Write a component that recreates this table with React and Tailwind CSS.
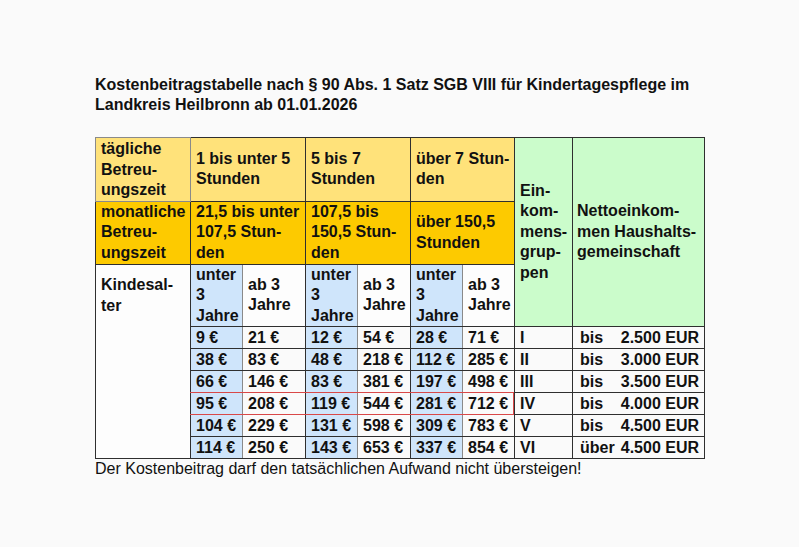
import React from "react";

const Y1 = "bg-[#ffe27a]";
const Y2 = "bg-[#fdca00]";
const BL = "bg-[#cfe5fb]";
const GR = "bg-[#cbfccb]";

const base = "border border-[#2f2f2f] px-[5px] align-middle leading-[20.5px] whitespace-nowrap";

const rows = [
  ["9 €", "21 €", "12 €", "54 €", "28 €", "71 €", "I", "bis", "2.500 EUR"],
  ["38 €", "83 €", "48 €", "218 €", "112 €", "285 €", "II", "bis", "3.000 EUR"],
  ["66 €", "146 €", "83 €", "381 €", "197 €", "498 €", "III", "bis", "3.500 EUR"],
  ["95 €", "208 €", "119 €", "544 €", "281 €", "712 €", "IV", "bis", "4.000 EUR"],
  ["104 €", "229 €", "131 €", "598 €", "309 €", "783 €", "V", "bis", "4.500 EUR"],
  ["114 €", "250 €", "143 €", "653 €", "337 €", "854 €", "VI", "über", "4.500 EUR"],
];

export default function App() {
  return (
    <div
      className="min-h-screen w-full bg-[#fafafa] flex justify-center pt-[75px] text-[#111]"
      style={{ fontFamily: '"Liberation Sans", Arial, sans-serif' }}
    >
      <div className="w-[609px]">
        <h1 className="text-[16px] font-bold leading-[20px] whitespace-nowrap">
          Kostenbeitragstabelle nach § 90 Abs. 1 Satz SGB VIII für Kindertagespflege im
          <br />
          Landkreis Heilbronn ab 01.01.2026
        </h1>
        <div className="relative mt-[22px]">
          <table className="table-fixed border-collapse w-[609px] text-[16px] font-bold">
            <colgroup>
              <col className="w-[95px]" />
              <col className="w-[52px]" />
              <col className="w-[63px]" />
              <col className="w-[52px]" />
              <col className="w-[53px]" />
              <col className="w-[52px]" />
              <col className="w-[52px]" />
              <col className="w-[58px]" />
              <col className="w-[132px]" />
            </colgroup>
            <tbody>
              <tr className="h-[63px]">
                <td className={`${base} ${Y1} align-top pt-[1px] border-[#8a8a8a]`}>
                  tägliche
                  <br />
                  Betreu-
                  <br />
                  ungszeit
                </td>
                <td colSpan={2} className={`${base} ${Y1}`}>
                  1 bis unter 5
                  <br />
                  Stunden
                </td>
                <td colSpan={2} className={`${base} ${Y1}`}>
                  5 bis 7
                  <br />
                  Stunden
                </td>
                <td colSpan={2} className={`${base} ${Y1}`}>
                  über 7 Stun-
                  <br />
                  den
                </td>
                <td rowSpan={3} className={`${base} ${GR}`}>
                  Ein-
                  <br />
                  kom-
                  <br />
                  mens-
                  <br />
                  grup-
                  <br />
                  pen
                </td>
                <td rowSpan={3} className={`${base} ${GR} pl-[4px]`}>
                  Nettoeinkom-
                  <br />
                  men Haushalts-
                  <br />
                  gemeinschaft
                </td>
              </tr>
              <tr className="h-[63px]">
                <td className={`${base} ${Y2}`}>
                  monatliche
                  <br />
                  Betreu-
                  <br />
                  ungszeit
                </td>
                <td colSpan={2} className={`${base} ${Y2}`}>
                  21,5 bis unter
                  <br />
                  107,5 Stun-
                  <br />
                  den
                </td>
                <td colSpan={2} className={`${base} ${Y2}`}>
                  107,5 bis
                  <br />
                  150,5 Stun-
                  <br />
                  den
                </td>
                <td colSpan={2} className={`${base} ${Y2}`}>
                  über 150,5
                  <br />
                  Stunden
                </td>
              </tr>
              <tr className="h-[62px]">
                <td className={`${base} border-b-0 bg-[#fdfdfd]`}>
                  Kindesal-
                  <br />
                  ter
                </td>
                <td className={`${base} ${BL} border-r-[#8a8a8a]`}>
                  unter
                  <br />3
                  <br />
                  Jahre
                </td>
                <td className={`${base} bg-[#fdfdfd]`}>
                  ab 3
                  <br />
                  Jahre
                </td>
                <td className={`${base} ${BL} border-r-[#8a8a8a]`}>
                  unter
                  <br />3
                  <br />
                  Jahre
                </td>
                <td className={`${base} bg-[#fdfdfd]`}>
                  ab 3
                  <br />
                  Jahre
                </td>
                <td className={`${base} ${BL} border-r-[#8a8a8a]`}>
                  unter
                  <br />3
                  <br />
                  Jahre
                </td>
                <td className={`${base} bg-[#fdfdfd]`}>
                  ab 3
                  <br />
                  Jahre
                </td>
              </tr>
              {rows.map((r, i) => (
                <tr key={i} className="h-[22px]">
                  {i === 0 && (
                    <td rowSpan={6} className={`${base} border-t-0 bg-[#fdfdfd]`} />
                  )}
                  <td className={`${base} ${BL} border-r-[#8a8a8a] leading-[20px]`}>{r[0]}</td>
                  <td className={`${base} bg-[#fafafa] leading-[20px]`}>{r[1]}</td>
                  <td className={`${base} ${BL} border-r-[#8a8a8a] leading-[20px]`}>{r[2]}</td>
                  <td className={`${base} bg-[#fafafa] leading-[20px]`}>{r[3]}</td>
                  <td className={`${base} ${BL} border-r-[#8a8a8a] leading-[20px]`}>{r[4]}</td>
                  <td className={`${base} bg-[#fafafa] leading-[20px]`}>{r[5]}</td>
                  <td className={`${base} bg-[#fafafa] leading-[20px]`}>{r[6]}</td>
                  <td className={`${base} bg-[#fafafa] leading-[20px] pl-[7px] pr-[5px]`}>
                    <div className="flex justify-between gap-[4px]">
                      <span>{r[7]}</span>
                      <span>{r[8]}</span>
                    </div>
                  </td>
                </tr>
              ))}
            </tbody>
          </table>
          <div className="pointer-events-none absolute left-[95px] top-[255px] w-[324px] h-[23px] border-t-[1.5px] border-b-[1.5px] border-r-[1.5px] border-[#d94848]" />
        </div>
        <p className="text-[16px] leading-[20px]">
          Der Kostenbeitrag darf den tatsächlichen Aufwand nicht übersteigen!
        </p>
      </div>
    </div>
  );
}
